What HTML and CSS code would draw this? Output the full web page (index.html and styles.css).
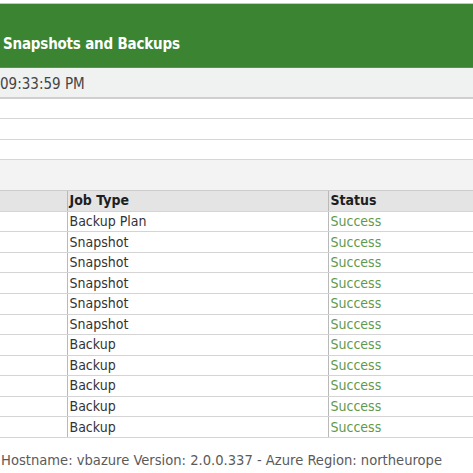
FILE: index.html
```html
<!DOCTYPE html>
<html>
<head>
<meta charset="utf-8">
<link rel="stylesheet" href="styles.css">
</head>
<body>
<div class="report">
  <div class="banner"><span class="title">Snapshots and Backups</span></div>
  <div class="timerow">09:33:59 PM</div>
  <div class="blank"></div>
  <div class="blank"></div>
  <div class="blank last"></div>
  <div class="section"></div>
  <table class="jobs">
    <colgroup><col class="c1"><col class="c2"><col class="c3"></colgroup>
    <thead>
      <tr><th></th><th>Job Type</th><th>Status</th></tr>
    </thead>
    <tbody>
      <tr><td></td><td>Backup Plan</td><td class="ok">Success</td></tr>
      <tr><td></td><td>Snapshot</td><td class="ok">Success</td></tr>
      <tr><td></td><td>Snapshot</td><td class="ok">Success</td></tr>
      <tr><td></td><td>Snapshot</td><td class="ok">Success</td></tr>
      <tr><td></td><td>Snapshot</td><td class="ok">Success</td></tr>
      <tr><td></td><td>Snapshot</td><td class="ok">Success</td></tr>
      <tr><td></td><td>Backup</td><td class="ok">Success</td></tr>
      <tr><td></td><td>Backup</td><td class="ok">Success</td></tr>
      <tr><td></td><td>Backup</td><td class="ok">Success</td></tr>
      <tr><td></td><td>Backup</td><td class="ok">Success</td></tr>
      <tr><td></td><td>Backup</td><td class="ok">Success</td></tr>
    </tbody>
  </table>
  <div class="footer">Hostname: vbazure Version: 2.0.0.337 - Azure Region: northeurope</div>
</div>
</body>
</html>
```
FILE: styles.css
```css
html, body {
  margin: 0;
  padding: 0;
  background: #ffffff;
}
body {
  width: 473px;
  height: 473px;
  overflow: hidden;
  font-family: "DejaVu Sans Condensed", "DejaVu Sans", sans-serif;
  font-stretch: condensed;
  color: #333333;
}
.report {
  padding-top: 3px;
  width: 473px;
}
.banner {
  border-top: 1px solid #b8d4b2;
  background: #3b8532;
  height: 65px;
  box-sizing: border-box;
  border-bottom: 1px solid #5b8f54;
  padding: 30px 0 0 3px;
}
.title {
  color: #ffffff;
  font-weight: bold;
  font-size: 15px;
  letter-spacing: -0.2px;
  line-height: 20px;
  display: block;
}
.timerow {
  background: #f0f1f1;
  height: 31px;
  box-sizing: border-box;
  border-bottom: 2px solid #d0d0d0;
  padding: 6px 0 0 0;
  font-size: 15px;
  line-height: 20px;
  color: #444444;
}
.blank {
  height: 20.4px;
  box-sizing: border-box;
  border-bottom: 1px solid #d6d6d6;
}
.section {
  background: #f3f3f3;
  height: 30.6px;
  box-sizing: border-box;
  border-bottom: 1px solid #cccccc;
}
.jobs {
  border-collapse: collapse;
  table-layout: fixed;
  width: 473px;
  font-size: 14px;
}
.c1 { width: 67px; }
.c2 { width: 261px; }
.c3 { width: 145px; }
.jobs tr {
  height: 20.55px;
}
.jobs th, .jobs td {
  padding: 0 0 0 2px;
  text-align: left;
  vertical-align: middle;
  border-bottom: 1px solid #d4d4d4;
  line-height: 17px;
  white-space: nowrap;
  overflow: hidden;
}
.jobs td + td, .jobs th + th {
  border-left: 1px solid #b9b9b9;
}
.jobs th {
  background: #e4e4e4;
  color: #1e1e1e;
  font-weight: bold;
}
.jobs .ok {
  color: #5f9a4c;
}
.footer {
  padding: 12px 0 0 1px;
  font-size: 14.6px;
  line-height: 20px;
  color: #5a5a5a;
  white-space: nowrap;
}
```
